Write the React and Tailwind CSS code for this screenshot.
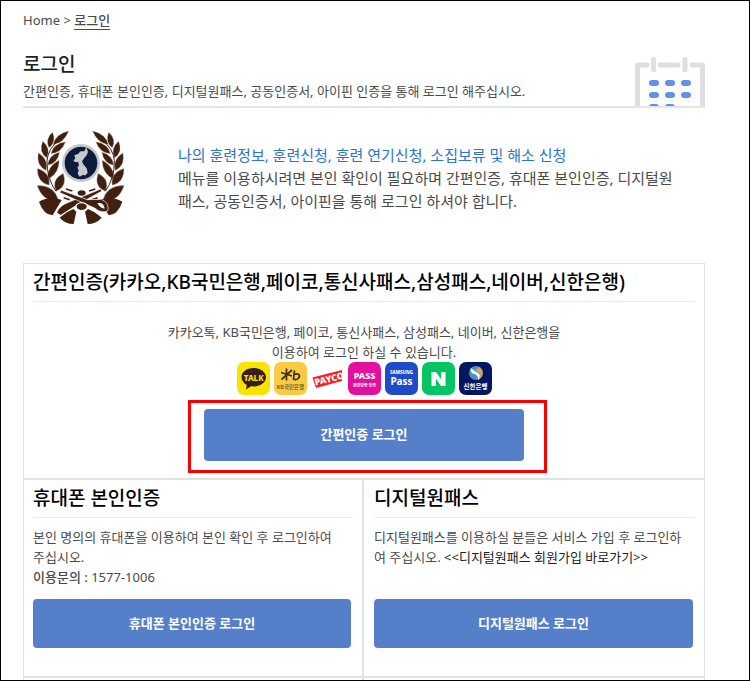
import React from "react";

// Leaves of the left half of the wreath: base x/y, tip x/y, half width
const leaves = [
  [98, 74, 147, 32, 19],
  [87, 84, 98, 36, 19],
  [92, 101, 137, 65, 19],
  [80, 114, 68, 63, 21],
  [83, 136, 119, 96, 19],
  [78, 152, 55, 98, 22],
  [82, 178, 118, 120, 22],
  [88, 196, 52, 145, 26],
  [108, 214, 130, 160, 28],
  [116, 243, 51, 196, 32],
];

const leafPath = ([bx, by, tx, ty, w]) => {
  const dx = tx - bx;
  const dy = ty - by;
  const len = Math.hypot(dx, dy);
  const nx = (-dy / len) * w;
  const ny = (dx / len) * w;
  const mx = bx + dx * 0.45;
  const my = by + dy * 0.45;
  return `M${bx} ${by}Q${mx + nx} ${my + ny} ${tx} ${ty}Q${mx - nx} ${my - ny} ${bx} ${by}Z`;
};

const WreathHalf = () => (
  <g>
    {leaves.map((leaf, index) => (
      <path key={index} d={leafPath(leaf)} stroke="#fff" strokeWidth="1" />
    ))}
    <path d="M116 62Q84 86 81 122Q80 175 108 214" fill="none" stroke="#42200f" strokeWidth="3" />
    <path d="M57 245Q90 226 125 240Q112 262 98 286Q70 284 57 245Z" />
    <path d="M119 293Q142 274 160 267L169 275L161 312Q136 312 119 293Z" />
    <path d="M138 207L157 213M131 233L149 239" stroke="#42200f" strokeWidth="5" />
  </g>
);

const Emblem = () => (
  <svg viewBox="48 30 267 285" className="h-[95px] w-[89px] shrink-0" fill="#42200f" role="img" aria-label="예비군">
    <WreathHalf />
    <g transform="translate(364 0) scale(-1 1)">
      <WreathHalf />
    </g>
    <path d="M110 278Q118 256 148 246L242 207L246 213L172 254L122 286Z" stroke="#fff" strokeWidth="2" />
    <path d="M122 210L202 239L244 238Q268 248 264 272Q245 282 224 264L120 218Z" stroke="#fff" strokeWidth="2" />
    <path d="M232 250Q250 246 254 265Q243 268 232 250Z" fill="#fff" />
    <ellipse cx="185" cy="219" rx="12" ry="8" />
    <ellipse cx="185" cy="260" rx="19" ry="13" fill="#fff" />
    <ellipse cx="185" cy="260" rx="15" ry="10" />
    <circle cx="183" cy="129" r="57" fill="#c9c9cc" />
    <circle cx="183" cy="129" r="49" fill="#0d1c3d" />
    <path
      d="M199 82L193 94L182 94L174 102L163 106L166 115L160 123L168 127L174 125L177 136L172 143L176 151L173 161L179 170L188 165L197 166L203 158L200 145L190 133L186 124L193 114L200 106L204 96Z"
      fill="#c9c9cc"
    />
  </svg>
);

const CalendarIcon = () => (
  <svg viewBox="0 0 70 49" className="h-[49px] w-[70px] shrink-0" aria-hidden="true">
    <path d="M2.500 49V8H12M25 8H43M57 8H67.500V49" fill="none" stroke="#dedfe1" strokeWidth="5" strokeLinecap="round" strokeLinejoin="round" />
    <path d="M18.500 2.500V13M50 2.500V13" stroke="#dedfe1" strokeWidth="5" strokeLinecap="round" />
    <g fill="#6292e0">
      {[14, 30, 46].map((x) => (
        <g key={x}>
          <rect x={x} y="23" width="10" height="6" rx="3" />
          <rect x={x} y="35" width="10" height="6" rx="3" />
        </g>
      ))}
      <rect x="14" y="47" width="10" height="6" rx="3" />
      <rect x="30" y="47" width="10" height="6" rx="3" />
    </g>
  </svg>
);

const AppIcon = ({ label, color, children }) => (
  <svg viewBox="0 0 33 33" className="size-[33px]" role="img" aria-label={label} textAnchor="middle">
    <rect width="33" height="33" rx="7" fill={color} />
    {children}
  </svg>
);

const ProviderIcons = () => (
  <div className="flex justify-center gap-1">
    <AppIcon label="카카오톡" color="#fbe300">
      <path d="M16.500 6C9.500 6 4.500 10 4.500 15.300C4.500 18.500 6.500 21.200 9.800 22.900L8.900 27.500L14 24.300C22.500 25.300 29 21 29 15.300C29 10 23.500 6 16.500 6Z" fill="#371d1e" />
      <text x="16.700" y="18.500" fontSize="8" fontWeight="800" fill="#fbe300">TALK</text>
    </AppIcon>
    <AppIcon label="KB국민은행" color="#fbca45">
      <path d="M12.500 6.500V18.500M7 10.500L18 14M18 8L7.500 17.500M20.500 8.500L19.500 17M20 12.500C25 10.500 27 14 24 16.500C22.500 18 20.500 17.800 19 16.500" fill="none" stroke="#3b3020" strokeWidth="1.700" />
      <text x="16.500" y="27" fontSize="5.500" fontWeight="500" fill="#5b4927">KB국민은행</text>
    </AppIcon>
    <svg viewBox="0 0 33 33" className="size-[33px]" role="img" aria-label="페이코" textAnchor="middle">
      <path d="M1.500 15.500L31 8V19L5 26Z" fill="#f52020" />
      <text x="19" y="20" fontSize="9" fontWeight="900" fill="#fff" transform="rotate(-14 19 20)">PAYCO</text>
    </svg>
    <AppIcon label="통신사패스" color="#e3109b">
      <text x="16.500" y="17" fontSize="9" fontWeight="800" fill="#fff">PASS</text>
      <text x="16.500" y="25" fontSize="4" fontWeight="700" fill="#fff">본인인증 인증</text>
    </AppIcon>
    <AppIcon label="삼성패스" color="#204bc8">
      <text x="16.500" y="12" fontSize="4.500" fontWeight="800" fill="#fff">SAMSUNG</text>
      <text x="16.500" y="23" fontSize="10" fontWeight="700" fill="#fff">Pass</text>
    </AppIcon>
    <AppIcon label="네이버" color="#05c463">
      <path d="M9.500 10H14L19 17.300V10H23.500V24H19L14 16.700V24H9.500Z" fill="#fff" />
    </AppIcon>
    <AppIcon label="신한은행" color="#04165f">
      <circle cx="17" cy="11" r="7" fill="#4d91cb" />
      <path d="M12 6C16 11 24 10 20 18C18 17 20 13 15 12C12 11 11 8 12 6Z" fill="#f7f7f7" />
      <path d="M20 4.800C25 8 25 14 20 17C22 13 21 10 16.500 8.500Z" fill="#d9a257" />
      <text x="16.500" y="26.500" fontSize="6.500" fontWeight="700" fill="#fff">신한은행</text>
    </AppIcon>
  </div>
);

const CardTitle = ({ children }) => (
  <h2 className="whitespace-nowrap border-b border-[#ececec] pb-[5px] text-[19px] font-medium leading-7 text-black">{children}</h2>
);

const LoginButton = ({ children, className = "h-[49px]" }) => (
  <button type="button" className={`w-full rounded bg-[#5580c9] text-[13px] font-bold text-white ${className}`}>
    {children}
  </button>
);

const App = () => {
  return (
    <div className="min-h-screen overflow-hidden border border-black bg-white pl-[22px] pr-11 font-['Noto_Sans','Noto_Sans_CJK_KR',sans-serif] text-[#4a4a4a]">
      <nav className="pt-[9px] text-[13px] leading-5">
        <a href="#home">Home</a> &gt;{" "}
        <a href="#login" className="font-medium underline underline-offset-4">로그인</a>
      </nav>

      <header className="mt-5 flex items-end justify-between border-b-2 border-[#e6e6e6]">
        <div className="pb-[5px]">
          <h1 className="text-[19px] font-medium leading-7 text-[#222]">로그인</h1>
          <p className="mt-[3px] text-[13px] leading-5">간편인증, 휴대폰 본인인증, 디지털원패스, 공동인증서, 아이핀 인증을 통해 로그인 해주십시오.</p>
        </div>
        <CalendarIcon />
      </header>

      <section className="flex gap-[53px] pb-[38px] pl-[13px] pt-[22px]">
        <Emblem />
        <p className="whitespace-nowrap pt-[14px] text-[15px] leading-[23px]">
          <span className="text-[#2a72d4]">나의 훈련정보, 훈련신청, 훈련 연기신청, 소집보류 및 해소 신청</span>
          <br />
          메뉴를 이용하시려면 본인 확인이 필요하며 간편인증, 휴대폰 본인인증, 디지털원
          <br />
          패스, 공동인증서, 아이핀을 통해 로그인 하셔야 합니다.
        </p>
      </section>

      <main className="border-x border-t border-[#e2e2e2]">
        <section className="px-[9px] pb-[17px] pt-1">
          <CardTitle>간편인증(카카오,KB국민은행,페이코,통신사패스,삼성패스,네이버,신한은행)</CardTitle>
          <p className="pt-5 text-center text-[13px] leading-5">
            카카오톡, KB국민은행, 페이코, 통신사패스, 삼성패스, 네이버, 신한은행을
            <br />
            이용하여 로그인 하실 수 있습니다.
          </p>
          <ProviderIcons />
          <div className="relative mx-auto mt-[14px] w-80">
            <LoginButton className="h-[52px]">간편인증 로그인</LoginButton>
            <span className="pointer-events-none absolute -bottom-3 -left-4 -right-[23px] -top-[9px] border-3 border-[#fa0000]" />
          </div>
        </section>

        <div className="grid grid-cols-2 border-y-2 border-[#e2e2e2]">
          <section className="border-r-2 border-[#e2e2e2] px-[9px] pb-7 pt-1">
            <CardTitle>휴대폰 본인인증</CardTitle>
            <div className="pr-[2px]">
              <p className="h-[81px] whitespace-nowrap pt-[9px] text-[13px] leading-5">
                본인 명의의 휴대폰을 이용하여 본인 확인 후 로그인하여
                <br />
                주십시오.
                <br />
                <strong className="font-medium">이용문의 :</strong> 1577-1006
              </p>
              <LoginButton>휴대폰 본인인증 로그인</LoginButton>
            </div>
          </section>
          <section className="pb-7 pl-[10px] pr-[9px] pt-1">
            <CardTitle>디지털원패스</CardTitle>
            <div className="pr-[2px]">
              <p className="h-[81px] whitespace-nowrap pt-[9px] text-[13px] leading-5">
                디지털원패스를 이용하실 분들은 서비스 가입 후 로그인하
                <br />
                여 주십시오. <a href="#join" className="text-[#222]">&lt;&lt;디지털원패스 회원가입 바로가기&gt;&gt;</a>
              </p>
              <LoginButton>디지털원패스 로그인</LoginButton>
            </div>
          </section>
        </div>
        <div className="grid grid-cols-2">
          <div className="h-[2px] border-r-2 border-[#e2e2e2]" />
        </div>
      </main>
    </div>
  );
};

export default App;
